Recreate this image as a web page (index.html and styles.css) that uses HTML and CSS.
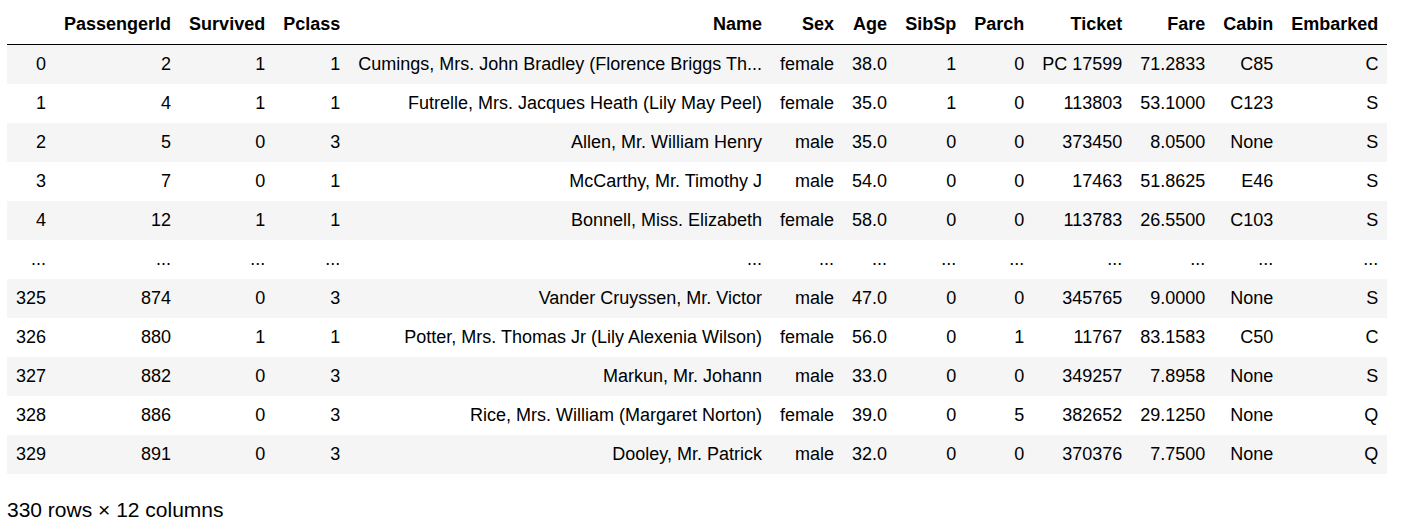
FILE: index.html
```html
<!DOCTYPE html>
<html>
<head>
<meta charset="utf-8">
<link rel="stylesheet" href="styles.css">
</head>
<body>
<div class="output">
<table class="dataframe">
  <thead>
    <tr><th></th><th>PassengerId</th><th>Survived</th><th>Pclass</th><th>Name</th><th>Sex</th><th>Age</th><th>SibSp</th><th>Parch</th><th>Ticket</th><th>Fare</th><th>Cabin</th><th>Embarked</th></tr>
  </thead>
  <tbody>
    <tr><th>0</th><td>2</td><td>1</td><td>1</td><td>Cumings, Mrs. John Bradley (Florence Briggs Th...</td><td>female</td><td>38.0</td><td>1</td><td>0</td><td>PC 17599</td><td>71.2833</td><td>C85</td><td>C</td></tr>
    <tr><th>1</th><td>4</td><td>1</td><td>1</td><td>Futrelle, Mrs. Jacques Heath (Lily May Peel)</td><td>female</td><td>35.0</td><td>1</td><td>0</td><td>113803</td><td>53.1000</td><td>C123</td><td>S</td></tr>
    <tr><th>2</th><td>5</td><td>0</td><td>3</td><td>Allen, Mr. William Henry</td><td>male</td><td>35.0</td><td>0</td><td>0</td><td>373450</td><td>8.0500</td><td>None</td><td>S</td></tr>
    <tr><th>3</th><td>7</td><td>0</td><td>1</td><td>McCarthy, Mr. Timothy J</td><td>male</td><td>54.0</td><td>0</td><td>0</td><td>17463</td><td>51.8625</td><td>E46</td><td>S</td></tr>
    <tr><th>4</th><td>12</td><td>1</td><td>1</td><td>Bonnell, Miss. Elizabeth</td><td>female</td><td>58.0</td><td>0</td><td>0</td><td>113783</td><td>26.5500</td><td>C103</td><td>S</td></tr>
    <tr><th>...</th><td>...</td><td>...</td><td>...</td><td>...</td><td>...</td><td>...</td><td>...</td><td>...</td><td>...</td><td>...</td><td>...</td><td>...</td></tr>
    <tr><th>325</th><td>874</td><td>0</td><td>3</td><td>Vander Cruyssen, Mr. Victor</td><td>male</td><td>47.0</td><td>0</td><td>0</td><td>345765</td><td>9.0000</td><td>None</td><td>S</td></tr>
    <tr><th>326</th><td>880</td><td>1</td><td>1</td><td>Potter, Mrs. Thomas Jr (Lily Alexenia Wilson)</td><td>female</td><td>56.0</td><td>0</td><td>1</td><td>11767</td><td>83.1583</td><td>C50</td><td>C</td></tr>
    <tr><th>327</th><td>882</td><td>0</td><td>3</td><td>Markun, Mr. Johann</td><td>male</td><td>33.0</td><td>0</td><td>0</td><td>349257</td><td>7.8958</td><td>None</td><td>S</td></tr>
    <tr><th>328</th><td>886</td><td>0</td><td>3</td><td>Rice, Mrs. William (Margaret Norton)</td><td>female</td><td>39.0</td><td>0</td><td>5</td><td>382652</td><td>29.1250</td><td>None</td><td>Q</td></tr>
    <tr><th>329</th><td>891</td><td>0</td><td>3</td><td>Dooley, Mr. Patrick</td><td>male</td><td>32.0</td><td>0</td><td>0</td><td>370376</td><td>7.7500</td><td>None</td><td>Q</td></tr>
  </tbody>
</table>
<p class="shape">330 rows × 12 columns</p>
</div>
</body>
</html>
```

FILE: styles.css
```css
html, body {
  margin: 0;
  padding: 0;
  background: #ffffff;
}
body {
  font-family: "Liberation Sans", Arial, sans-serif;
  color: #000;
}
.output {
  padding: 5px 7px 0 7px;
}
.dataframe {
  border: none;
  border-collapse: collapse;
  border-spacing: 0;
  font-size: 18px;
  color: #000;
}
.dataframe thead {
  border-bottom: 1px solid #000;
  vertical-align: bottom;
}
.dataframe th,
.dataframe td {
  text-align: right;
  vertical-align: middle;
  padding: 9px 9px;
  line-height: normal;
  white-space: nowrap;
  border: none;
}
.dataframe thead th {
  font-weight: bold;
}
.dataframe tbody th {
  font-weight: normal;
}
.dataframe tbody tr:nth-child(odd) {
  background: #f5f5f5;
}
.shape {
  font-size: 21px;
  margin: 24px 0 0 0;
}
```
